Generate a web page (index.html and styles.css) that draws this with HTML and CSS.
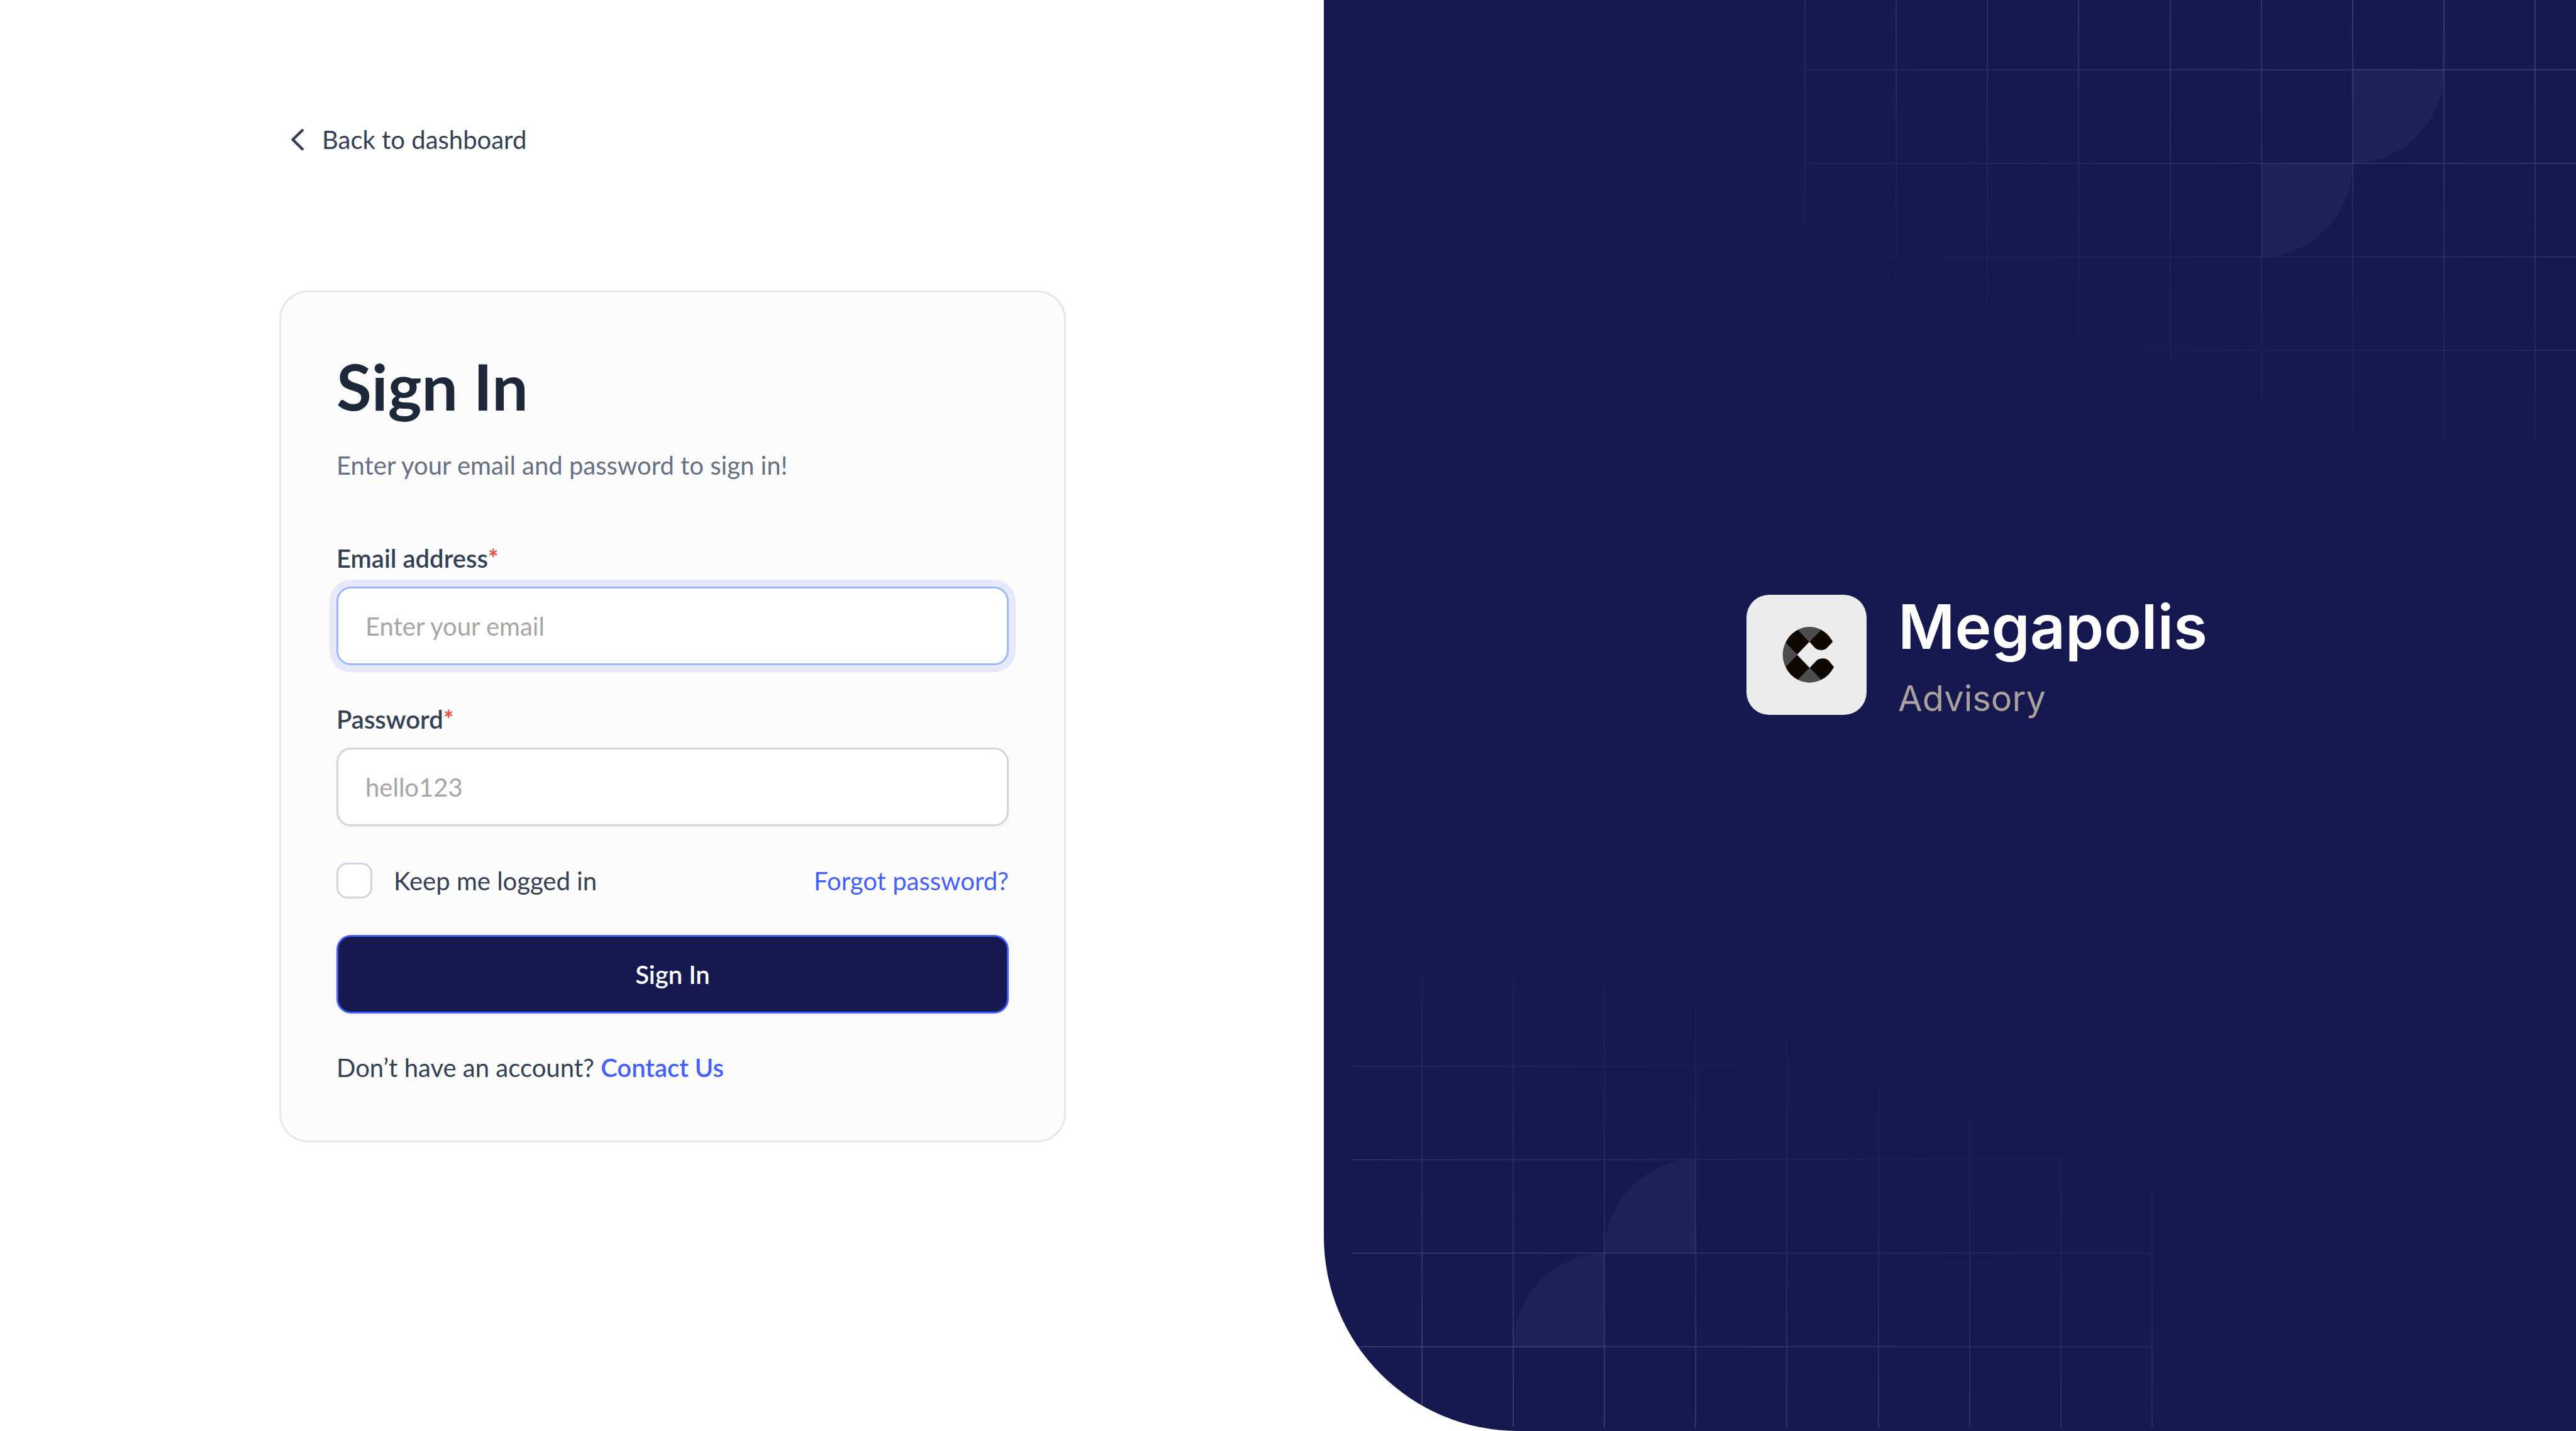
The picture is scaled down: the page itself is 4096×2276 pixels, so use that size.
FILE: index.html
```html
<!DOCTYPE html>
<html lang="en">
<head>
<meta charset="utf-8">
<title>Sign In</title>
<link rel="stylesheet" href="styles.css">
</head>
<body>
<div class="page">
  <main class="left">
    <a class="back" href="#">
      <svg class="chevron" viewBox="0 0 20 20" aria-hidden="true"><path d="M12.7 4.900 7.400 10l5.300 5.200" fill="none" stroke="currentColor" stroke-width="1.500" stroke-linecap="round" stroke-linejoin="round"/></svg>
      <span>Back to dashboard</span>
    </a>
    <form class="card">
      <h1 class="title">Sign In</h1>
      <p class="subtitle">Enter your email and password to sign in!</p>
      <div class="fields">
        <div class="field">
          <label class="label" for="email">Email address<span class="star">*</span></label>
          <input class="input input-active" id="email" type="email" placeholder="Enter your email">
        </div>
        <div class="field">
          <label class="label" for="password">Password<span class="star">*</span></label>
          <input class="input" id="password" type="password" placeholder="hello123">
        </div>
        <div class="options">
          <label class="keep" for="keep"><input class="check" id="keep" type="checkbox"><span>Keep me logged in</span></label>
          <a class="link" href="#">Forgot password?</a>
        </div>
        <button class="submit" type="submit">Sign In</button>
        <p>Don’t have an account? <a class="link link-strong" href="#">Contact Us</a></p>
      </div>
    </form>
  </main>
  <aside class="right">
    <svg class="grid grid-top" viewBox="0 0 1350 762" aria-hidden="true">
      <defs>
        <linearGradient id="fade" gradientUnits="userSpaceOnUse" x1="816" y1="-276" x2="460" y2="675">
          <stop offset="0" stop-color="#fff" stop-opacity="1"/>
          <stop offset="1" stop-color="#fff" stop-opacity="0"/>
        </linearGradient>
        <mask id="fade-mask" maskUnits="userSpaceOnUse" x="0" y="0" width="1350" height="762"><rect width="1350" height="762" fill="url(#fade)"/></mask>
        <g id="pattern">
          <path mask="url(#fade-mask)" fill="none" stroke="#b2b2b2" stroke-opacity=".36" stroke-width="1.600" d="M6 0V762M159 0V762M312 0V762M465 0V762M619 0V762M772 0V762M925 0V762M1078 0V762M1231 0V762M6 135H1350M6 292H1350M6 449H1350M6 606H1350"/>
          <path fill="#fff" fill-opacity=".04" d="M925 135H1078A153 157 0 0 1 925 292ZM772 292H925A153 157 0 0 1 772 449Z"/>
        </g>
      </defs>
      <use href="#pattern"/>
    </svg>
    <svg class="grid grid-bottom" viewBox="0 0 1350 762" aria-hidden="true"><use href="#pattern" transform="rotate(180 675 381)"/></svg>
    <div class="brand">
      <svg class="logo" viewBox="0 0 603 603" aria-hidden="true">
        <rect width="603" height="603" rx="114" fill="#ececec"/>
        <g transform="translate(94 65)">
          <path fill="#4d4d4d" d="M165 110A136 140 0 0 1 280 110L222 171ZM102 176A136 140 0 0 0 102 297L160 236ZM165 362A136 140 0 0 0 280 362L223 302Z"/>
          <path fill="#0f0800" d="M165 110A136 140 0 0 0 102 176L160 236 222 171ZM102 297A136 140 0 0 0 165 362L223 302 160 236ZM222 171 280 110A136 140 0 0 1 339 171L310 202Q299 213 282 213 262 213 250 202ZM223 302 255 268Q268 255 290 255 308 255 319 266L345 297A136 140 0 0 1 280 362Z"/>
        </g>
      </svg>
      <div class="names">
        <div class="name">Megapolis</div>
        <div class="tagline">Advisory</div>
      </div>
    </div>
  </aside>
</div>
</body>
</html>
```
FILE: styles.css
```css
* { box-sizing: border-box; margin: 0; }
body { font-family: Lato, "Liberation Sans", sans-serif; font-size: 40px; line-height: 56px; color: #344054; background: #fff; }
.page { display: flex; min-height: 100vh; }
.left { flex: 1; padding: 193px 410px 0 444px; }
.back { display: flex; align-items: center; gap: 10px; color: inherit; text-decoration: none; }
.chevron { width: 58px; height: 58px; }
.card { margin-top: 211px; padding: 84px 88px 88px; border: 3px solid #e7e7e7; border-radius: 46px; background: #fcfcfc; }
.title { font-size: 102px; line-height: 130px; font-weight: 700; color: #1d2939; }
.subtitle { margin-top: 33px; color: #667085; }
.fields { display: flex; flex-direction: column; gap: 58px; margin-top: 92px; }
.label { display: block; margin-bottom: 17px; font-weight: 600; }
.star { color: #f04438; }
.input { display: block; width: 100%; height: 125px; padding: 0 43px; border: 3px solid #d0d5dd; border-radius: 23px; background: #fff; color: inherit; font: inherit; outline: none; box-shadow: 0 3px 6px rgba(16, 24, 40, .04); }
.input::placeholder { color: #a6a6a6; opacity: 1; }
.input-active { border-color: #9cb9ff; box-shadow: 0 0 0 11px #e6e8fb; }
.options { display: flex; align-items: center; justify-content: space-between; height: 57px; }
.keep { display: flex; align-items: center; gap: 34px; }
.check { appearance: none; width: 57px; height: 57px; margin: 0; border: 3px solid #d0d5dd; border-radius: 17px; background: #fff; }
.link { color: #465fff; text-decoration: none; }
.link-strong { font-weight: 600; }
.submit { height: 125px; border: 3px solid #465fff; border-radius: 23px; background: #161950; color: #fff; font: inherit; font-weight: 600; box-shadow: 0 3px 6px rgba(16, 24, 40, .04); }
.right { position: relative; overflow: hidden; width: 1991px; padding: 0 0 194px 86px; display: flex; align-items: center; justify-content: center; background: #161950; border-bottom-left-radius: 309px; }
.grid { position: absolute; width: 1280px; height: 722px; }
.grid-top { top: -17px; right: -48px; }
.grid-bottom { bottom: 6px; left: 43px; }
.brand { display: flex; align-items: center; gap: 50px; font-family: Inter, "Liberation Sans", sans-serif; }
.logo { width: 191px; height: 191px; }
.name { font-size: 98px; line-height: 140px; font-weight: 600; color: #fff; }
.tagline { font-size: 56px; line-height: 88px; color: #aaa19d; }
```
